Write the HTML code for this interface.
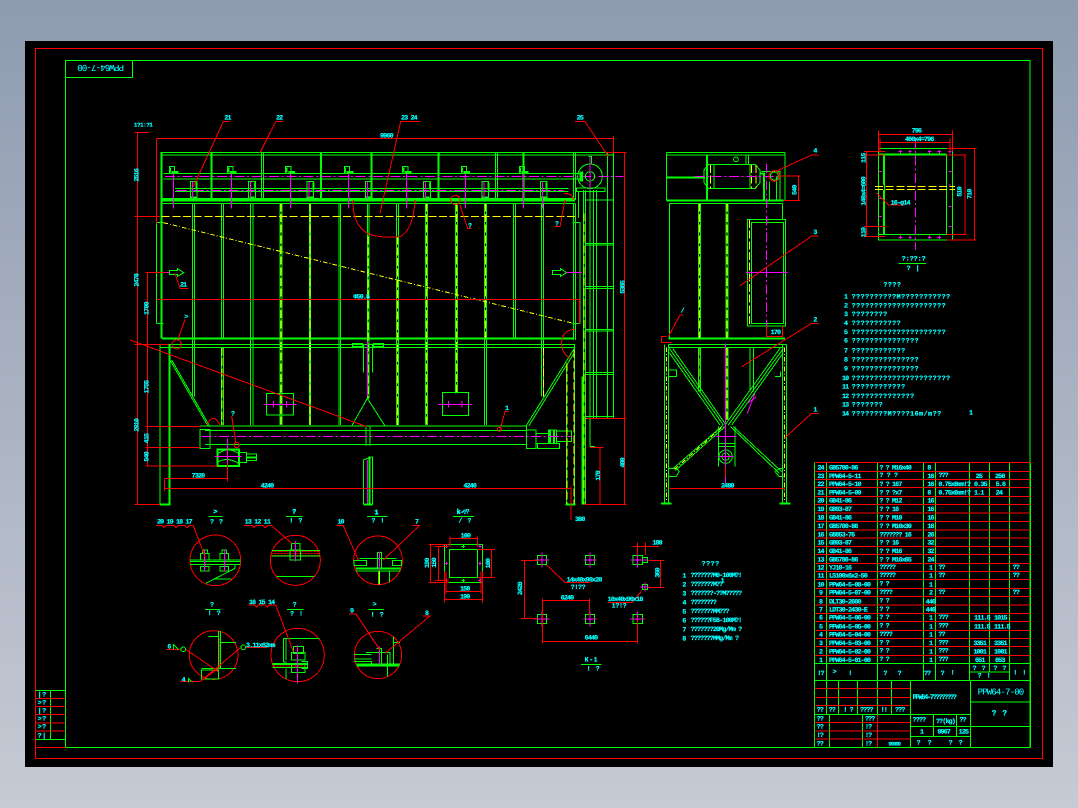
<!DOCTYPE html>
<html><head><meta charset="utf-8"><title>PPW64-7-00</title>
<style>
html,body{margin:0;padding:0;width:1078px;height:808px;overflow:hidden;background:linear-gradient(#8e9bb0,#c6cad4)}
svg{position:absolute;left:0;top:0;display:block}
path,rect,circle,line,polygon{fill:none}
.g{stroke:#0f0;stroke-width:3}.G{stroke:#0f0;stroke-width:6}.H{stroke:#0f0;stroke-width:10}
.r{stroke:#f00;stroke-width:3}.m{stroke:#f0f;stroke-width:3}
.md{stroke:#f0f;stroke-width:3;stroke-dasharray:30 8 6 8}
.y{stroke:#ff0;stroke-width:3;stroke-dasharray:24 8}
.y2{stroke:#ff0;stroke-width:3;stroke-dasharray:14 6 3 6}
text{fill:#0ff;stroke:#0ff;stroke-width:.6px;font-family:"Liberation Mono",monospace;font-weight:bold;font-size:20px;letter-spacing:-2.5px;text-rendering:geometricPrecision}
.q{letter-spacing:1.5px}.s{font-size:17px;letter-spacing:-1px}
</style></head><body>
<svg width="1078" height="808" viewBox="0 0 1078 808" shape-rendering="crispEdges">
<rect x="25" y="41" width="1028" height="726" style="fill:#000"/>
<rect x="35.5" y="48.5" width="1007" height="710" stroke="#f00" stroke-width="1"/>
<rect x="65.5" y="60.5" width="964.5" height="687" stroke="#0f0" stroke-width="1"/>
<path d="M65.5 77.5H132.5V60.5" stroke="#0f0" stroke-width="1"/>
<text transform="rotate(180 100 69)" x="76" y="73" style="font-size:9px;letter-spacing:-.8px;font-weight:normal;stroke-width:.1px">PPW64-7-00</text>
<!-- left small table -->
<g transform="translate(15 680) scale(.33333)">
<path class="g" d="M61 31H151M61 178H151M106 31V178"/>
<path class="r" d="M61 55H151M61 79H151M61 103H151M61 129H151M61 153H151M61 202H151"/>
<text x="68" y="50" class="q">|?</text><text x="68" y="73" class="q">&gt;?</text><text x="68" y="98" class="q">|?</text><text x="68" y="122" class="q">&gt;?</text><text x="68" y="146" class="q">&gt;?</text><text x="68" y="172" class="q">?|</text>
</g>

<!-- MAIN VIEW -->
<g transform="translate(130 110) scale(.33333)">
<path class="g" d="M92 128H1450M92 135H1450M395 128V270M400 128V270M1097 128V270M1103 128V270M1330 128V270M1336 128V270M1432 128V925M1450 128V925"/>
<path class="G" d="M94 128V685M245 128V270M573 128V270M725 128V270M925 128V270M1180 128V270M96 685H1330"/>
<path class="H" d="M95 269H1335"/>
<path class="g" d="M95 280H1335M100 190H1360M100 207H1360M135 235H1315M135 245H1315M1330 280V690M1336 280V690"/>
<path class="md" d="M105 199H1480M140 241H1300"/>
<path class="g" d="M118 170h16v20h-16zM293 170h16v20h-16zM467 170h16v20h-16zM643 170h16v20h-16zM818 170h16v20h-16zM994 170h16v20h-16zM1168 170h16v20h-16z"/>
<path class="g" d="M181 215h20v50h-20zM356 215h20v50h-20zM531 215h20v50h-20zM706 215h20v50h-20zM881 215h20v50h-20zM1056 215h20v50h-20zM1231 215h20v50h-20z"/>
<path class="G" d="M125 186h20M300 186h20M475 186h20M650 186h20M825 186h20M1000 186h20M1175 186h20M183 262h16M358 262h16M533 262h16M708 262h16M883 262h16M1058 262h16M1233 262h16M120 172V188M295 172V188M469 172V188M645 172V188M820 172V188M996 172V188M1170 172V188M200 218V238M375 218V238M550 218V238M725 218V238M900 218V238M1075 218V238M1250 218V238"/>
<path class="m" d="M130 190V295M305 190V295M481 190V295M655 190V295M830 190V295M1006 190V295M1180 190V295M187 215V265M362 215V265M537 215V265M712 215V265M887 215V265M1062 215V265M1237 215V295"/>
<path class="g" d="M188 280V860M193 280V860M275 280V685M281 280V685M362 280V945M369 280V945M450 280V945M456 280V945M538 280V945M542 280V945M627 280V945M632 280V945M712 280V865M717 280V865M800 280V945M806 280V945M887 280V945M892 280V945M977 280V850M982 280V850M1063 280V945M1069 280V945M1150 280V685M1156 280V685M1234 280V860M1240 280V860M275 712V945M281 712V945"/>
<path class="y" d="M453 280V945M540 280V945M714 380V865M802 380V945M889 280V945M979 280V850M1066 280V685M276 712V945M1240 712V860"/>
<path class="y" d="M95 320H1335"/>
<path class="y2" d="M100 338L1330 640"/>
<path class="g" d="M80 338H100M80 640H100M80 338V640M1328 338H1350M1328 640H1350M1350 338V640"/>
<path class="g" d="M118 482H143V476L161 488L143 499V493H118ZM1310 488L1292 476V482H1267V493H1292V499Z"/>
<path class="m" d="M72 488H118M1310 488H1356"/>
<path class="g" d="M90 703H1335M90 712H1335M90 703V1183M668 700h30v10h-30zM730 700h30v10h-30zM700 703V788M728 703V788"/>
<path class="G" d="M118 703V1183M88 1183H122"/>
<path class="m" d="M712 696V860M712 1050V1180"/>
<path class="g" d="M120 750L235 950M125 750L240 950M1190 945L1335 712M1196 948L1335 725M712 865L665 948M712 865L765 948"/>
<path class="g" d="M409 850H490V915H409ZM937 848H1016V916H937Z"/>
<path class="m" d="M402 883H500M924 883H1026M430 873V893M470 873V893M956 873V893M996 873V893"/>
<path class="g" d="M210 948H1190M225 962H1190M225 1003H1190M210 958H240V1015H210ZM708 950V1008M720 950V1008M1190 945V1015H1218V960H1190M1218 970H1255V1000H1218ZM1222 1000H1288V1015H1222ZM1255 960H1280V1000H1255ZM1280 963H1325V995H1280Z"/>
<path class="G" d="M1260 962V1000M1272 958V1000"/>
<path class="md" d="M215 979H1325"/>
<path class="g" d="M265 1030Q295 1010 325 1030M265 1055Q295 1040 325 1060M327 1028H350V1058H327ZM350 1032H380V1052H350ZM700 1050L728 1040M700 1050V1183M728 1040V1183"/>
<path class="G" d="M263 1018H327V1068H263ZM348 1042H378M718 1040V1183M700 1183H728"/>
<path class="m" d="M292 985V1075M255 1040H335"/>
<path class="g" d="M1345 244V324M1360 240V1183M1366 240V1183M1390 240V925M1400 240V925M1366 270H1450M1366 400H1450M1366 405H1450M1366 530H1450M1366 535H1450M1366 658H1450M1366 663H1450M1366 788H1450M1366 793H1450M1366 920H1450M1366 926H1450M1380 240V1010M1380 1010H1395M1310 760V1183M1333 705V1183"/>
<path class="y" d="M1362 310V1183M1311 760V1183M1332 720V1183"/>
<path class="G" d="M1306 1183H1336M1358 800V1183"/>
<path class="H" d="M1354 184V214"/>
<circle class="g" cx="1380" cy="199" r="37"/><circle class="g" cx="1380" cy="199" r="14"/>
<path class="g" d="M1340 234H1425V244H1340ZM1375 140H1385V162"/>
<path class="m" d="M1380 140V240"/>
<path class="r" d="M22 68V1183M14 68H55M14 320H90M14 703H90M14 1183H90M52 488V1068M46 488H110M46 703H115M46 950H210M46 1012H210M46 1068H262M80 85H1450M80 85V340M1450 78V128M1484 128V1183M1430 128H1490M1370 925H1490M1365 1183H1490M80 568H1350M1348 568V640M103 1105H293M293 1060V1115M103 1105V1145M103 1135H1320M1323 1130V1230M1410 1012V1183M1380 1012H1420"/>
<path class="r" d="M0 690L710 950M190 230L280 35H298M390 128L437 35H458M750 310L812 35H870M1435 140L1365 35H1335M135 490L150 535H175M145 685L165 628M318 1000L305 918M1110 960L1125 905H1135M990 285L1013 355H1025M1305 270L1290 350H1275"/>
<path class="r" d="M670 270Q665 340 712 370Q745 385 810 380Q850 360 855 270M1300 250Q1330 250 1330 270M1335 658Q1295 660 1295 700Q1295 730 1320 745M230 945Q250 905 270 945"/>
<circle class="r" cx="976" cy="270" r="14"/><circle class="r" cx="140" cy="703" r="14"/><circle class="r" cx="320" cy="1005" r="8"/><circle class="r" cx="1108" cy="958" r="6"/>
<text x="283" y="28">21</text><text x="438" y="28">22</text><text x="813" y="28">23 24</text><text x="1340" y="28">25</text>
<text x="750" y="83">9960</text><text x="670" y="566">Φ50.5</text><text x="185" y="1103">7320</text><text x="392" y="1133">4240</text><text x="1000" y="1133">4240</text>
<text x="150" y="530">21</text><text x="163" y="626">&gt;</text><text x="303" y="916">?</text><text x="1125" y="900">1</text><text x="1014" y="352">?</text><text x="1275" y="346">?</text>
<text x="12" y="50" class="s">1?1:?1</text>
<text transform="rotate(-90 20 200)" x="5" y="205">2516</text><text transform="rotate(-90 20 510)" x="0" y="515">2470</text><text transform="rotate(-90 50 595)" x="30" y="600">1700</text><text transform="rotate(-90 50 830)" x="30" y="835">1755</text><text transform="rotate(-90 20 945)" x="0" y="950">2910</text><text transform="rotate(-90 50 985)" x="35" y="990">415</text><text transform="rotate(-90 50 1040)" x="35" y="1045">540</text><text transform="rotate(-90 1478 528)" x="1455" y="533">5365</text><text transform="rotate(-90 1478 1055)" x="1460" y="1060">400</text><text transform="rotate(-90 1405 1097)" x="1390" y="1102">170</text>
<text x="250" y="1210">&gt;</text><text x="487" y="1210">?</text><text x="733" y="1212">1</text><text x="980" y="1212">k-?</text>
<text x="1335" y="1233">380</text>
</g>

<!-- SIDE VIEW & FLANGE -->
<g transform="translate(640 110) scale(.33333)">
<path class="g" d="M80 128H435M80 135H435M80 128V272M435 128V272M88 280H428M88 280V685M428 280V328M318 135V165M325 135V165M192 180L205 163H345L360 180V218L345 235H205L192 218ZM222 163V235M330 163V235M365 185H420V270M372 215V270M388 215V270M410 200V270"/>
<path class="G" d="M80 271H430M80 203H195M201 135V270M85 685H435M362 190H372V270"/>
<path class="y" d="M212 165V235M335 165V235M348 165V235M178 280V685M261 280V685M180 712V845M261 712V930"/>
<path class="g" d="M175 280V685M182 280V685M258 280V685M264 280V685M175 712V845M182 712V845M258 712V930M264 712V930M330 712V845M340 712V845"/>
<path class="md" d="M163 199H420"/>
<circle class="g" cx="403" cy="198" r="12"/><circle class="g" cx="288" cy="148" r="7"/>
<path class="g" d="M322 328H437V648H322ZM335 338H430V640H335Z"/>
<path class="y" d="M328 330V645"/>
<path class="m" d="M318 487H443"/><path class="md" d="M380 160V680"/>
<path class="g" d="M85 703H440M85 712H430M73 703V1180M85 703V1180M427 703V1180M440 703V1180M88 715L250 945M98 715L258 945M88 728L240 945M430 715L265 945M420 715L255 945M430 728L275 945M100 1075L250 945M106 1082L255 950M425 1085L280 950M418 1090L272 950M85 780H110V800H85ZM85 1075H110L118 1085L108 1100H85ZM405 800H422V785M430 1075H418L405 1085L418 1100H430"/>
<path class="y2" d="M104 1078L250 948M80 712V1175M433 712V1175"/>
<path class="G" d="M63 1181H95M418 1181H452"/>
<path class="g" d="M235 950V1070M285 950V1070M235 1000H285M235 1010H285"/>
<circle class="g" cx="257" cy="1040" r="20"/><circle class="g" cx="257" cy="1040" r="11"/>
<path class="m" d="M257 700V1120M230 980H290M235 1040H280M322 880L350 860M322 910L345 850"/>
<path class="r" d="M420 198H480M430 272H480M476 198V272M380 648V680H428V648M88 1135H435M257 1070V1100"/>
<path class="r" d="M405 185L515 135H535M300 527L515 378H535M305 770L515 640H535M433 985L515 910H535M85 680L120 615H130M80 680h-15v18h30"/>
<circle class="r" cx="403" cy="198" r="16"/>
<text x="520" y="128">4</text><text x="520" y="372">3</text><text x="520" y="634">2</text><text x="520" y="904">1</text><text x="122" y="608">/</text>
<text x="392" y="672">170</text><text x="243" y="1132">2480</text><text transform="rotate(-90 465 235)" x="445" y="240">540</text>

<!-- flange -->
<path class="g" d="M715 115H937V390H715ZM715 135H920M733 135V373M715 373H920M920 135V373"/>
<path class="G" d="M715 133H920M732 135V225M732 240V373"/>
<path class="y" d="M705 229H945M705 238H945"/>
<path class="md" d="M826 85V420"/>
<path class="m" d="M776 125h10M781 120v10M805 125h10M810 120v10M864 125h10M869 120v10M893 125h10M898 120v10M925 125h10M930 120v10M925 185h10M925 225h6M925 290h10M925 350h10M776 382h10M781 377v10M805 382h10M810 377v10M864 382h10M869 377v10M893 382h10M898 377v10M716 185h10M716 265h10M716 320h10"/>
<path class="r" d="M715 62V125M937 62V125M715 73H937M720 97H930M720 85V125M930 85V125M672 125H735M680 125V380M672 135H735M672 350H735M672 380H735M920 115H1010M920 135H980M920 373H980M920 390H1010M975 135V373M1003 115V390M710 250L745 285H793"/>
<text x="815" y="68">796</text><text x="795" y="93">400x4=796</text><text transform="rotate(-90 672 255)" x="640" y="260">140x4=600</text><text transform="rotate(-90 672 142)" x="655" y="147">115</text><text transform="rotate(-90 672 365)" x="655" y="370">110</text><text transform="rotate(-90 960 245)" x="945" y="250">510</text><text transform="rotate(-90 990 252)" x="975" y="257">710</text><text x="752" y="283">16-φ14</text>
<path class="g" d="M775 460H858"/>
<text x="785" y="451" class="q" style="letter-spacing:0">?:??:?</text><text x="800" y="480" class="q">? |</text>
<text x="730" y="530" class="q">????</text>
<text x="612" y="565">1</text><text x="635" y="565" class="q">??????????M???????????</text>
<text x="612" y="592">2</text><text x="635" y="592" class="q">?????????????????????</text>
<text x="612" y="618">3</text><text x="635" y="618" class="q">????????</text>
<text x="612" y="645">4</text><text x="635" y="645" class="q">???????????</text>
<text x="612" y="672">5</text><text x="635" y="672" class="q">?????????????????????</text>
<text x="612" y="698">6</text><text x="635" y="698" class="q">???????????????</text>
<text x="612" y="727">7</text><text x="635" y="727" class="q">????????????</text>
<text x="612" y="755">8</text><text x="635" y="755" class="q">???????????????</text>
<text x="612" y="782">9</text><text x="635" y="782" class="q">???????????????</text>
<text x="606" y="810">10</text><text x="635" y="810" class="q">??????????????????????</text>
<text x="606" y="836">11</text><text x="635" y="836" class="q">????????????</text>
<text x="606" y="864">12</text><text x="635" y="864" class="q">??????????????</text>
<text x="606" y="890">13</text><text x="635" y="890" class="q">???????</text>
<text x="606" y="917">14</text><text x="635" y="917" class="q">????????M????16m/m??</text><text x="987" y="913">1</text>
</g>

<!-- DETAILS -->
<g transform="translate(150 505) scale(.33333)">
<circle class="r" cx="196" cy="166" r="76"/><circle class="r" cx="436" cy="166" r="75"/><circle class="r" cx="684" cy="166" r="73"/><circle class="r" cx="191" cy="450" r="73"/><circle class="r" cx="443" cy="450" r="80"/><circle class="r" cx="684" cy="450" r="71"/>
<path class="g" d="M120 165H272M120 170H272M120 178H272M152 145H177V165H152ZM210 145H235V165H210ZM158 135H172V145H158ZM216 135H230V145H216ZM152 185H177V198H152ZM210 185H235V198H210ZM168 235L255 190M190 222H245M255 178V190"/>
<path class="m" d="M163 135V200M224 135V200"/>
<path class="r" d="M365 140H510M365 146H510M365 152H510" stroke-dasharray="6 3"/>
<path class="g" d="M365 137H510M365 153H510M425 115H450V135H425ZM420 135H452V165H420ZM380 214H492"/>
<path class="m" d="M436 108V170"/>
<path class="g" d="M628 160H740M612 167H650V182H612ZM728 167H755V182H728ZM618 198H752M685 200V238M718 200V232M682 142H694V190H682Z"/>
<path class="G" d="M618 191H752"/><path class="m" d="M688 140V195"/><path stroke="#ff0" stroke-width="3" d="M688 200V238"/>
<path class="g" d="M175 395H205M212 412H258M155 490H258M155 495H205V522H155ZM205 378V490M212 378V490"/>
<path class="r" d="M208 400V490" stroke-dasharray="6 3"/>
<path class="g" d="M400 400V470L410 472M408 400V465M400 400H508M430 425H460V445H430ZM425 443H465V465H425ZM425 478H465V503H425ZM408 490V522M455 470H472V490H455M368 488H472"/>
<path class="G" d="M368 477H472"/><path class="r" d="M370 483H470" stroke-dasharray="6 3"/>
<path class="m" d="M443 420V536"/>
<path class="g" d="M612 448H665M612 462H665M648 442H720V475M612 470H665V478M730 395V475M730 412H750M712 448V515M680 430H695V475M620 483H748"/>
<path class="G" d="M620 479H748"/><path class="m" d="M688 425V480"/>
<path class="r" d="M18 62H36L42 68L48 62H72L78 68L84 62H106L112 68L118 62H130L165 155M282 62H306L312 68L318 62H340L346 68L352 62H365L425 115M560 62H580L625 165M788 62H808L700 165M48 433H93M107 433L205 500M287 427H353M273 427L150 530H90M205 490L150 530M295 300H314L320 306L326 300H347L353 306L359 300H377L430 440M597 327H618L690 435M818 333H840L705 445"/>
<circle class="g" cx="100" cy="433" r="7"/><circle class="g" cx="280" cy="427" r="7"/>
<path class="g" d="M70 433V418L85 433M115 532V520L128 532"/>
<path class="g" d="M175 34H218M408 34H458M651 34H713M165 313H212M411 313H461M655 313H702"/>
<text x="21" y="56">20 19 18 17</text><text x="284" y="56">13 12 11</text><text x="562" y="56">10</text><text x="795" y="56">7</text>
<text x="190" y="25">&gt;</text><text x="426" y="25">?</text><text x="674" y="28">1</text>
<text x="180" y="56" class="q">? ?</text><text x="418" y="53" class="q">! ?</text><text x="664" y="52" class="q">? !</text>
<text x="180" y="305">?</text><text x="428" y="305">?</text><text x="668" y="303">&gt;</text>
<text x="173" y="330" class="q">! ?</text><text x="420" y="331" class="q">? !</text><text x="662" y="335" class="q">! ?</text>
<text x="297" y="297">16 15 14</text><text x="600" y="322">9</text><text x="825" y="330">8</text><text x="52" y="430">6</text><text x="95" y="529">4</text><text x="288" y="426">3.11x62mm</text>
</g>
<g transform="translate(420 505) scale(.33333)">
<path class="g" d="M73 118H188V232H73ZM88 133H173V218H88Z"/>
<path class="m" d="M75 124h10M80 119v10M175 124h10M180 119v10M75 175h10M80 170v10M175 175h10M180 170v10M75 226h10M80 221v10M175 226h10M180 221v10"/>
<path class="g" d="M125 124h10M130 119v10M125 227h10M130 222v10"/>
<path class="r" d="M25 118H85M25 232H85M45 124H85M45 226H85M32 118V232M55 124V226M90 95V125M172 95V125M90 100H172M78 200V265M183 200V265M78 260H183M73 200V292M188 200V292M73 284H188M173 133H225M173 218H225M215 133V218"/>
<text x="122" y="98">100</text><text x="120" y="256">150</text><text x="120" y="280">190</text><text transform="rotate(-90 22 175)" x="8" y="180">190</text><text transform="rotate(-90 43 175)" x="30" y="180">150</text><text transform="rotate(-90 205 175)" x="190" y="180">100</text>
<path class="g" d="M352 151h28v28h-28zM496 151h28v28h-28zM639 151h28v28h-28zM352 328h28v28h-28zM496 328h28v28h-28zM639 328h28v28h-28zM667 157h16v16h-16zM667 238h16v16h-16z"/>
<path class="m" d="M344 165h44M366 142v46M490 165h40M510 142v46M632 165h42M653 142v46M344 342h44M366 320v44M490 342h40M510 320v44M632 342h42M653 320v44M662 246h26M675 232v28M667 165h16"/>
<path class="r" d="M313 167V340M303 166H352M303 340H352M367 409H653M367 287H508M367 280V415M653 342V415M508 280V330M637 124H717M653 113V150M676 113V150M722 167V247M685 166H732M685 247H732M380 180L435 232H512M665 258L635 292H563"/>
<text x="440" y="229">14x40x90x20</text><text x="452" y="252" class="q" style="letter-spacing:-1px">?!??</text><text x="563" y="288">10x40x90x18</text><text x="575" y="308" class="q" style="letter-spacing:-1px">1?!?</text>
<text x="422" y="283">6240</text><text x="494" y="404">6440</text><text x="697" y="119">180</text><text transform="rotate(-90 300 252)" x="282" y="258">2420</text><text transform="rotate(-90 712 206)" x="700" y="212">360</text>
<path class="g" d="M99 34H162M483 478H545"/>
<text x="110" y="26" class="q">k-?</text><text x="115" y="52" class="q">/ ?</text><text x="494" y="470" class="q">K-1</text><text x="500" y="497" class="q">! ?</text>
<text x="845" y="181" class="q">????</text>
<text x="787" y="218">1</text><text x="812" y="216">???????M0-100M?!</text>
<text x="787" y="245">2</text><text x="812" y="243">???????M??</text>
<text x="787" y="272">3</text><text x="812" y="270">???????-??M?????</text>
<text x="787" y="299">4</text><text x="812" y="297">????????</text>
<text x="787" y="326">5</text><text x="812" y="324">???????MM???</text>
<text x="787" y="353">6</text><text x="812" y="351">??????F58-100M?!</text>
<text x="787" y="380">7</text><text x="812" y="378">???????20Mg/Mm ?</text>
<text x="787" y="407">8</text><text x="812" y="405">???????MMg/Mm ?</text>
<text x="902" y="233">1</text>
</g>

<!-- TABLE -->
<g transform="translate(810 455) scale(.33333)">
<path class="g" d="M14 22V877M49 22V778M202 22V778M340 22V676M376 22V676M478 22V676M538 22V651M598 22V676M661 22V877M14 625H661M14 676H661M478 651H598M85 676V778M142 676V778M244 676V778M301 676V877M14 778H481M58 778V877M157 778V877M481 676V877M481 741H661M481 814H661M370 778V844M440 778V844M301 814H481M301 844H481M0 877H661"/>
<path class="r" d="M14 22H661M14 49H661M14 73H661M14 97H661M14 124H661M14 148H661M14 174H661M14 199H661M14 225H661M14 249H661M14 274H661M14 299H661M14 325H661M14 349H661M14 373H661M14 400H661M14 424H661M14 450H661M14 475H661M14 499H661M14 526H661M14 550H661M14 575H661M14 601H661M14 700H301M14 727H301M14 751H301M14 802H301M14 828H301M14 852H301M203 778V877"/>
<text x="22" y="43">24</text><text x="57" y="43">GB5780-86</text><text x="208" y="43">? ? M16x40</text><text x="352" y="43">8</text>
<text x="22" y="69">23</text><text x="57" y="69">PPW64-5-11</text><text x="208" y="66" class="q" style="letter-spacing:-1px">? ? ?</text><text x="352" y="69">16</text><text x="385" y="66">???</text><text x="497" y="69">25</text><text x="555" y="69">250</text>
<text x="22" y="93">22</text><text x="57" y="93">PPW64-5-10</text><text x="208" y="93">? ? 167</text><text x="352" y="93">16</text><text x="385" y="93">0.75x8mm!?</text><text x="492" y="93">0.35</text><text x="557" y="93">5.6</text>
<text x="22" y="118">21</text><text x="57" y="118">PPW64-5-09</text><text x="208" y="118">? ? ?x7</text><text x="352" y="118">8</text><text x="385" y="118">0.75x6mm!?</text><text x="492" y="118">1.1</text><text x="557" y="118">24</text>
<text x="22" y="143">20</text><text x="57" y="143">GB41-86</text><text x="208" y="143">? ? M12</text><text x="352" y="143">16</text>
<text x="22" y="168">19</text><text x="57" y="168">GB93-87</text><text x="208" y="168">? ? 16</text><text x="352" y="168">16</text>
<text x="22" y="193">18</text><text x="57" y="193">GB41-86</text><text x="208" y="193">? ? M10</text><text x="352" y="193">16</text>
<text x="22" y="219">17</text><text x="57" y="219">GB5780-86</text><text x="208" y="219">? ? M10x30</text><text x="352" y="219">16</text>
<text x="22" y="244">16</text><text x="57" y="244">GB853-76</text><text x="208" y="244">??????? 16</text><text x="352" y="244">26</text>
<text x="22" y="269">15</text><text x="57" y="269">GB93-87</text><text x="208" y="269">? ? 16</text><text x="352" y="269">32</text>
<text x="22" y="294">14</text><text x="57" y="294">GB41-86</text><text x="208" y="294">? ? M16</text><text x="352" y="294">32</text>
<text x="22" y="319">13</text><text x="57" y="319">GB5780-86</text><text x="208" y="319">? ? M16x65</text><text x="352" y="319">24</text>
<text x="22" y="344">12</text><text x="57" y="344">YJ10-16</text><text x="208" y="342">?????</text><text x="357" y="344">1</text><text x="385" y="342">??</text><text x="608" y="342">??</text>
<text x="22" y="368">11</text><text x="57" y="368">LS100x6x2-50</text><text x="208" y="366">?????</text><text x="357" y="368">1</text><text x="385" y="366">??</text><text x="608" y="366">??</text>
<text x="22" y="394">10</text><text x="57" y="394">PPW64-5-08-00</text><text x="208" y="392">? ?</text><text x="357" y="394">1</text>
<text x="27" y="419">9</text><text x="57" y="419">PPW64-5-07-00</text><text x="208" y="417">????</text><text x="357" y="419">2</text><text x="385" y="417">??</text><text x="608" y="417">??</text>
<text x="27" y="445">8</text><text x="57" y="445">DLT30-2600</text><text x="208" y="443">? ?</text><text x="347" y="445">440</text>
<text x="27" y="470">7</text><text x="57" y="470">LDT30-2430-E</text><text x="208" y="468">? ?</text><text x="347" y="470">440</text>
<text x="27" y="494">6</text><text x="57" y="494">PPW64-5-06-00</text><text x="208" y="492">? ?</text><text x="357" y="494">1</text><text x="385" y="492">???</text><text x="492" y="494">111.5</text><text x="552" y="494">1015</text>
<text x="27" y="520">5</text><text x="57" y="520">PPW64-5-05-00</text><text x="208" y="518">? ?</text><text x="357" y="520">1</text><text x="385" y="518">???</text><text x="492" y="520">111.5</text><text x="552" y="520">111.5</text>
<text x="27" y="545">4</text><text x="57" y="545">PPW64-5-04-00</text><text x="208" y="543">????</text><text x="357" y="545">1</text><text x="385" y="543">??</text>
<text x="27" y="570">3</text><text x="57" y="570">PPW64-5-03-00</text><text x="208" y="568">? ?</text><text x="357" y="570">1</text><text x="385" y="568">???</text><text x="490" y="570">3351</text><text x="552" y="570">3351</text>
<text x="27" y="595">2</text><text x="57" y="595">PPW64-5-02-00</text><text x="208" y="593">? ?</text><text x="357" y="595">1</text><text x="385" y="593">???</text><text x="490" y="595">1001</text><text x="552" y="595">1001</text>
<text x="27" y="621">1</text><text x="57" y="621">PPW64-5-01-00</text><text x="208" y="618">? ?</text><text x="357" y="621">1</text><text x="385" y="618">???</text><text x="495" y="621">651</text><text x="555" y="621">653</text>
<text x="22" y="660">!?</text><text x="68" y="656">&gt;</text><text x="115" y="660">!</text><text x="220" y="660">?</text><text x="263" y="660">?</text><text x="342" y="660">??</text><text x="392" y="660">?</text><text x="422" y="658">!</text><text x="488" y="645" class="q">? ?</text><text x="550" y="645" class="q">? ?</text><text x="503" y="667" class="q">? !</text><text x="610" y="658" class="q">! !</text>
<text x="20" y="770">??</text><text x="56" y="770">??</text><text x="100" y="770">! ?</text><text x="150" y="770">????</text><text x="212" y="770">!!</text><text x="255" y="770">???</text>
<text x="20" y="796">??</text><text x="20" y="820">??</text><text x="20" y="846">!?</text><text x="20" y="871">??</text>
<text x="165" y="796">???</text><text x="165" y="820">!?</text><text x="165" y="846">!?</text><text x="165" y="871">!?</text><text x="235" y="871" style="font-size:16px">99999</text>
<text x="308" y="732" style="font-size:21px;letter-spacing:-4px">PPW64-7????????</text>
<text x="503" y="718" style="font-size:27px;letter-spacing:-2.5px;font-weight:normal;stroke-width:.3px">PPW64-7-00</text>
<text x="545" y="782" class="q" style="font-size:24px">? ?</text>
<text x="308" y="800">????</text><text x="378" y="804">??(kg)</text><text x="448" y="800">??</text>
<text x="330" y="835">1</text><text x="382" y="835">9967</text><text x="446" y="835">125</text>
<text x="320" y="868">?</text><text x="353" y="868">?</text><text x="416" y="868">?</text><text x="446" y="868">?</text>
</g>
</svg>
</body></html>
